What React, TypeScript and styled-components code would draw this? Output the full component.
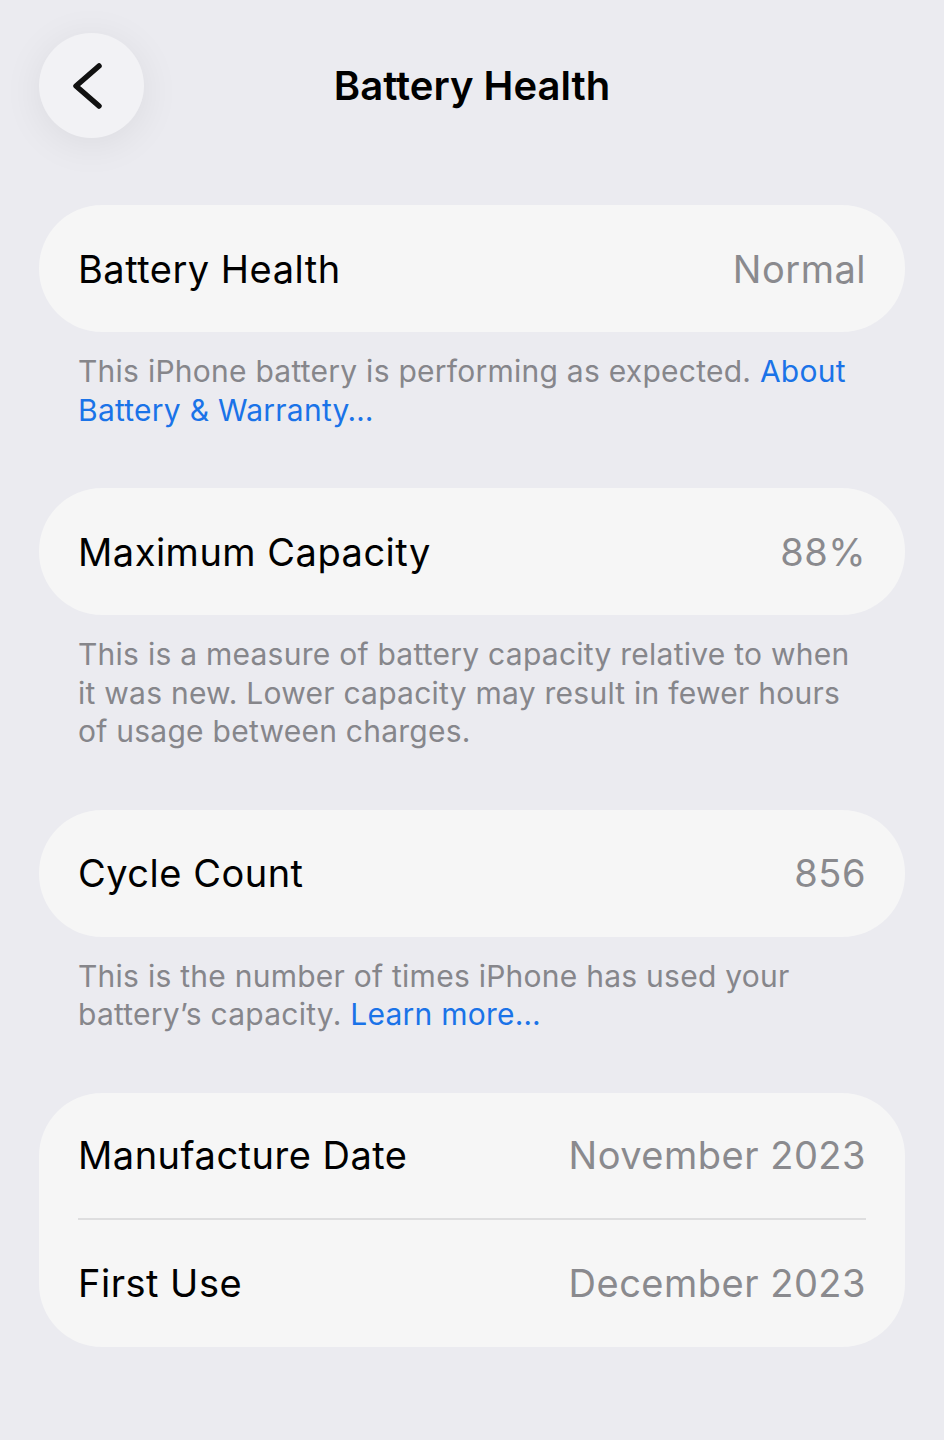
import React from "react";
import styled, { createGlobalStyle } from "styled-components";

const GlobalStyle = createGlobalStyle`
  html, body {
    margin: 0;
    padding: 0;
    background: #ebebf0;
  }

  body {
    font-family: Inter, "Noto Sans", "Liberation Sans", sans-serif;
    -webkit-font-smoothing: antialiased;
  }
`;

const Screen = styled.div`
  width: 944px;
  min-height: 1440px;
  background: #ebebf0;
  box-sizing: border-box;
  padding: 0 39px;
`;

const Header = styled.div`
  display: grid;
  grid-template-columns: 105px 1fr 105px;
  grid-template-rows: 105px;
  align-items: center;
  padding-top: 33px;
  height: 205px;
  box-sizing: border-box;
`;

const BackButton = styled.button`
  width: 105px;
  height: 105px;
  border-radius: 50%;
  border: none;
  padding: 0;
  background: #f2f2f5;
  box-shadow: 0 6px 40px rgba(0, 0, 0, 0.07);
  display: flex;
  align-items: center;
  justify-content: center;
`;

const Title = styled.h1`
  margin: 0;
  text-align: center;
  font-size: 40px;
  font-weight: 600;
  letter-spacing: 0;
  color: #000;
`;

const Section = styled.section`
  display: flex;
  flex-direction: column;
  margin-bottom: 59px;
`;

const Card = styled.div`
  background: #f6f6f6;
  border-radius: 63px;
  padding: 0 39px;
`;

const Row = styled.div<{ $divider?: boolean }>`
  display: flex;
  justify-content: space-between;
  align-items: center;
  height: 127px;
  box-sizing: border-box;
  border-bottom: ${(p) => (p.$divider ? "2px solid #dededf" : "none")};
`;

const Label = styled.span`
  font-size: 38px;
  color: #000;
  letter-spacing: 0.5px;
`;

const Value = styled.span`
  font-size: 38px;
  color: #8a8a8e;
  letter-spacing: 0.5px;
`;

const Footer = styled.p`
  margin: 0;
  padding: 20px 39px 0;
  font-size: 30px;
  line-height: 38.5px;
  color: #86868b;
  letter-spacing: 0.25px;
`;

const Link = styled.a`
  color: #1a73e8;
  text-decoration: none;
`;

function Chevron() {
	return (
		<svg width="105" height="105" viewBox="0 0 105 105">
			<path
				d="M60 33 L37 53 L60 73"
				fill="none"
				stroke="#111"
				strokeWidth="5.5"
				strokeLinecap="round"
				strokeLinejoin="round"
			/>
		</svg>
	);
}

export default function App() {
	return (
		<Screen>
			<GlobalStyle />
			<Header>
				<BackButton aria-label="Back">
					<Chevron />
				</BackButton>
				<Title>Battery Health</Title>
				<div />
			</Header>

			<Section>
				<Card>
					<Row>
						<Label>Battery Health</Label>
						<Value>Normal</Value>
					</Row>
				</Card>
				<Footer>
					This iPhone battery is performing as expected. <Link href="#">About Battery &amp; Warranty…</Link>
				</Footer>
			</Section>

			<Section>
				<Card>
					<Row>
						<Label>Maximum Capacity</Label>
						<Value>88%</Value>
					</Row>
				</Card>
				<Footer>
					This is a measure of battery capacity relative to when it was new. Lower capacity may result in fewer hours of usage between charges.
				</Footer>
			</Section>

			<Section>
				<Card>
					<Row>
						<Label>Cycle Count</Label>
						<Value>856</Value>
					</Row>
				</Card>
				<Footer>
					This is the number of times iPhone has used your battery’s capacity. <Link href="#">Learn more…</Link>
				</Footer>
			</Section>

			<Section>
				<Card>
					<Row $divider>
						<Label>Manufacture Date</Label>
						<Value>November 2023</Value>
					</Row>
					<Row>
						<Label>First Use</Label>
						<Value>December 2023</Value>
					</Row>
				</Card>
			</Section>
		</Screen>
	);
}
